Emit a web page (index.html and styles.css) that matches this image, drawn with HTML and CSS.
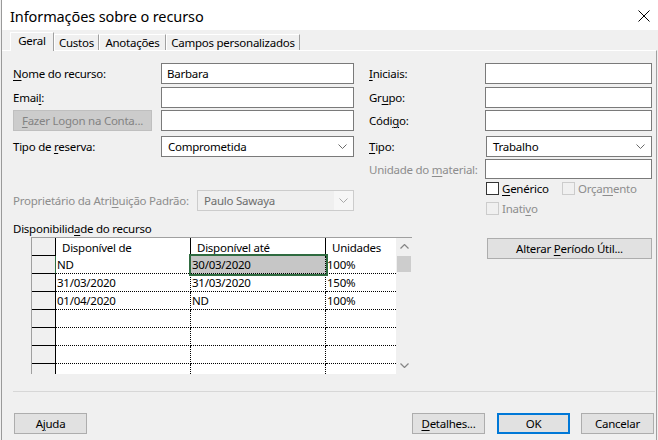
FILE: index.html
```html
<!DOCTYPE html>
<html lang="pt">
<head>
<meta charset="utf-8">
<title>Informações sobre o recurso</title>
<link rel="stylesheet" href="styles.css">
</head>
<body>
<div class="dialog">
  <div class="titlebar">
    <span class="title">Informações sobre o recurso</span>
    <span class="close"><svg width="12" height="12" viewBox="0 0 12 12"><path d="M0.5 0.5 L11.5 11.5 M11.5 0.5 L0.5 11.5" stroke="#000" stroke-width="1" fill="none"/></svg></span>
  </div>
  <div class="tabstrip">
    <div class="tab sel w1">Geral</div>
    <div class="tab w2">Custos</div>
    <div class="tab w3">Anotações</div>
    <div class="tab w4">Campos personalizados</div>
  </div>
  <div class="panel">
    <div class="top">
      <div class="col-left">
        <div class="row r1"><span class="lbl"><u>N</u>ome do recurso:</span><div class="field">Barbara</div></div>
        <div class="row r2"><span class="lbl">Emai<u>l</u>:</span><div class="field"></div></div>
        <div class="row r3"><span class="lbl"><span class="btn-disabled"><span><u>F</u>azer Logon na Conta...</span></span></span><div class="field"></div></div>
        <div class="row r4"><span class="lbl">Tipo de <u>r</u>eserva:</span><div class="field select"><span class="val">Comprometida</span><svg class="chev" width="9" height="5" viewBox="0 0 9 5"><polyline points="0.5,0.5 4.5,4.5 8.5,0.5" fill="none" stroke="#6a6a6a" stroke-width="1"/></svg></div></div>
        <div class="row r5"><span class="lbl lbl-wide dim">Proprietário da Atri<u>b</u>uição Padrão:</span><div class="field select disabled"><span class="val">Paulo Sawaya</span><span class="dropbtn"><svg width="9" height="5" viewBox="0 0 9 5"><polyline points="0.5,0.5 4.5,4.5 8.5,0.5" fill="none" stroke="#a8a8a8" stroke-width="1"/></svg></span></div></div>
      </div>
      <div class="col-right">
        <div class="row r1"><span class="lbl2"><u>I</u>niciais:</span><div class="field2"></div></div>
        <div class="row r2"><span class="lbl2">Gr<u>u</u>po:</span><div class="field2"></div></div>
        <div class="row r3"><span class="lbl2">Códi<u>g</u>o:</span><div class="field2"></div></div>
        <div class="row r4"><span class="lbl2"><u>T</u>ipo:</span><div class="field2 select"><span class="val">Trabalho</span><svg class="chev" width="9" height="5" viewBox="0 0 9 5"><polyline points="0.5,0.5 4.5,4.5 8.5,0.5" fill="none" stroke="#6a6a6a" stroke-width="1"/></svg></div></div>
        <div class="row r5b"><span class="lbl2 dim">Unidade do <u>m</u>aterial:</span><div class="field2"></div></div>
        <div class="chkrow c1">
          <span class="chk-item first"><span class="box"></span><span class="chk-text"><u>G</u>enérico</span></span>
          <span class="chk-item"><span class="box off"></span><span class="chk-text dim">Orça<u>m</u>ento</span></span>
        </div>
        <div class="chkrow c2">
          <span class="chk-item"><span class="box off"></span><span class="chk-text dim">Inati<u>v</u>o</span></span>
        </div>
      </div>
    </div>
    <div class="avail-label"><span>Disponibilid<u>a</u>de do recurso</span></div>
    <div class="avail-body">
      <div class="grid">
        <div class="table">
          <div class="trow head">
            <div class="rh"></div>
            <div class="hc">Disponível de</div>
            <div class="hc">Disponível até</div>
            <div class="hc last">Unidades</div>
          </div>
          <div class="trow">
            <div class="rh active"></div>
            <div class="dc">ND</div>
            <div class="dc selected">30/03/2020</div>
            <div class="dc last">100%</div>
          </div>
          <div class="trow">
            <div class="rh"></div>
            <div class="dc">31/03/2020</div>
            <div class="dc">31/03/2020</div>
            <div class="dc last">150%</div>
          </div>
          <div class="trow">
            <div class="rh"></div>
            <div class="dc">01/04/2020</div>
            <div class="dc">ND</div>
            <div class="dc last">100%</div>
          </div>
          <div class="trow"><div class="rh"></div><div class="dc"></div><div class="dc"></div><div class="dc last"></div></div>
          <div class="trow"><div class="rh"></div><div class="dc"></div><div class="dc"></div><div class="dc last"></div></div>
          <div class="trow"><div class="rh"></div><div class="dc"></div><div class="dc"></div><div class="dc last"></div></div>
          <div class="trow"><div class="rh"></div><div class="dc"></div><div class="dc"></div><div class="dc last"></div></div>
        </div>
        <div class="scrollbar">
          <div class="sb-btn"><svg width="9" height="5" viewBox="0 0 9 5"><polyline points="0.5,4.5 4.5,0.5 8.5,4.5" fill="none" stroke="#858585" stroke-width="1.2"/></svg></div>
          <div class="sb-thumb"></div>
          <div class="sb-space"></div>
          <div class="sb-btn"><svg width="9" height="5" viewBox="0 0 9 5"><polyline points="0.5,0.5 4.5,4.5 8.5,0.5" fill="none" stroke="#858585" stroke-width="1.2"/></svg></div>
        </div>
      </div>
      <div class="btn alter"><span>Alterar <u>P</u>eríodo Útil...</span></div>
    </div>
    <div class="sep"></div>
    <div class="buttons">
      <div class="btn ajuda"><span>A<u>j</u>uda</span></div>
      <div class="btn detalhes"><span><u>D</u>etalhes...</span></div>
      <div class="btn ok"><span>OK</span></div>
      <div class="btn cancelar"><span>Cancelar</span></div>
    </div>
  </div>
</div>
</body>
</html>
```
FILE: styles.css
```css
* { box-sizing: border-box; }
html, body { margin: 0; padding: 0; background: #f0f0f0; }
body {
  font-family: "Noto Sans", "Open Sans", sans-serif;
  font-size: 11.5px;
  letter-spacing: -0.25px;
  color: #000;
  width: 658px;
  height: 440px;
  overflow: hidden;
}
u { text-decoration: underline; text-underline-offset: 2px; }

.dialog {
  width: 657px;
  height: 440px;
  margin-left: 1px;
  border-left: 1px solid #9a9a9a;
  display: flex;
  flex-direction: column;
  background: #f0f0f0;
}

.titlebar {
  height: 30px;
  flex: none;
  background: #fff;
  display: flex;
  align-items: center;
  padding-left: 8px;
}
.title { flex: 1; font-size: 14.5px; letter-spacing: -0.1px; padding-top: 1px; }
.close { display: flex; margin-right: 8px; margin-top: 1px; }

.tabstrip {
  height: 20px;
  flex: none;
  display: flex;
  align-items: flex-end;
  padding-left: 8px;
}
.tab {
  height: 16px;
  border-top: 1px solid #fff;
  border-left: 1px solid #fff;
  border-right: 1px solid #a0a0a0;
  display: flex;
  align-items: center;
  justify-content: center;
  padding-bottom: 1px;
}
.tab.sel {
  height: 19px;
  margin-bottom: -1px;
  position: relative;
  z-index: 1;
  background: #f0f0f0;
  padding-bottom: 3px;
}
.w1 { width: 44px; }
.w2 { width: 45px; }
.w3 { width: 67px; }
.w4 { width: 134px; }

.panel {
  flex: 1;
  border-top: 1px solid #fff;
  border-right: 1px solid #a0a0a0;
  margin-right: 1px;
  padding: 12px 0 0 11px;
  display: flex;
  flex-direction: column;
}

.top { display: flex; height: 153px; flex: none; }
.col-left { width: 341px; display: flex; flex-direction: column; }
.col-right { width: 283px; margin-left: 15px; display: flex; flex-direction: column; }

.row { display: flex; align-items: center; height: 21px; flex: none; }
.r2 { margin-top: 3px; }
.r3 { margin-top: 2px; }
.r4 { margin-top: 5px; }
.r5 { margin-top: 33px; }
.r5b { margin-top: 2px; height: 20px; }

.lbl { width: 148px; flex: none; white-space: nowrap; }
.lbl-wide { width: 184px; }
.lbl2 { width: 116px; flex: none; white-space: nowrap; }
.dim { color: #8d8d8d; }

.field, .field2 {
  height: 100%;
  background: #fff;
  border: 1px solid #7a7a7a;
  display: flex;
  align-items: center;
  padding-left: 5px;
}
.field { width: 193px; }
.field2 { width: 167px; }
.select { padding-left: 6px; padding-right: 6px; }
.select .val { flex: 1; }
.field2.select { margin-left: 1px; width: 166px; }
.chev { flex: none; }

.field.select.disabled {
  width: 157px;
  background: #efefef;
  border-color: #cccccc;
  color: #6d6d6d;
  padding-right: 0;
}
.dropbtn {
  width: 19px;
  align-self: stretch;
  background: #f6f6f6;
  display: flex;
  align-items: center;
  justify-content: center;
}

.btn-disabled {
  display: flex;
  align-items: center;
  justify-content: center;
  width: 139px;
  height: 21px;
  background: #cccccc;
  border: 1px solid #bfbfbf;
  color: #838383;
}

.chkrow { display: flex; align-items: center; height: 13px; flex: none; padding-left: 116px; }
.c1 { margin-top: 3px; }
.c2 { margin-top: 7px; }
.chk-item { display: flex; align-items: center; }
.chk-item.first { width: 76px; }
.box {
  width: 13px;
  height: 13px;
  margin-left: 1px;
  border: 1px solid #333;
  background: #fff;
  flex: none;
}
.box.off { border-color: #cccccc; background: #f0f0f0; }
.chk-text { margin-left: 3px; }

.avail-label { height: 16px; margin-top: 4px; display: flex; align-items: center; flex: none; }
.avail-body { display: flex; margin-top: 1px; flex: none; }

.grid {
  margin-left: 18px;
  width: 381px;
  height: 137px;
  overflow: hidden;
  border-left: 1px solid #a0a0a0;
  border-top: 1px solid #a0a0a0;
  display: flex;
}
.table { width: 364px; flex: none; background: #fff; }
.trow {
  display: grid;
  grid-template-columns: 24px 135px 135px 70px;
  height: 18px;
}
.rh {
  background: #f0f0f0;
  border-right: 1px solid #000;
  border-bottom: 1px solid #000;
}
.rh.active { border-right-color: #2f6b40; }
.hc {
  border-right: 1px solid #000;
  padding-left: 6px;
  display: flex;
  align-items: center;
  background: #fff;
}
.dc {
  border-right: 1px dotted #000;
  border-bottom: 1px dotted #000;
  padding-left: 1px;
  display: flex;
  align-items: center;
  white-space: nowrap;
}
.hc.last, .dc.last { border-right: none; }
.dc.selected {
  background: #c6c6c6;
  outline: 2px solid #2f6b40;
  outline-offset: 0;
  position: relative;
  z-index: 1;
}

.scrollbar {
  width: 17px;
  flex: none;
  background: #f0f0f0;
  border-right: 1px solid #a0a0a0;
  display: flex;
  flex-direction: column;
}
.sb-btn { height: 17px; display: flex; align-items: center; justify-content: center; flex: none; }
.sb-thumb { height: 16px; margin: 1px 1px 0 1px; background: #cdcdcd; flex: none; }
.sb-space { flex: 1; }

.btn {
  height: 21px;
  background: #e1e1e1;
  border: 1px solid #adadad;
  display: flex;
  align-items: center;
  justify-content: center;
  flex: none;
  white-space: nowrap;
}
.alter { width: 165px; margin-left: 75px; margin-top: 1px; }

.sep { height: 1px; background: #d7d7d7; margin-top: 17px; margin-right: 1px; flex: none; }

.buttons { display: flex; margin-top: 21px; padding-right: 2px; }
.buttons .btn { width: 73px; }
.ajuda { margin-left: 1px; }
.detalhes { margin-left: auto; }
.ok { margin-left: 12px; border: 2px solid #0078d7; }
.cancelar { margin-left: 11px; }
```
